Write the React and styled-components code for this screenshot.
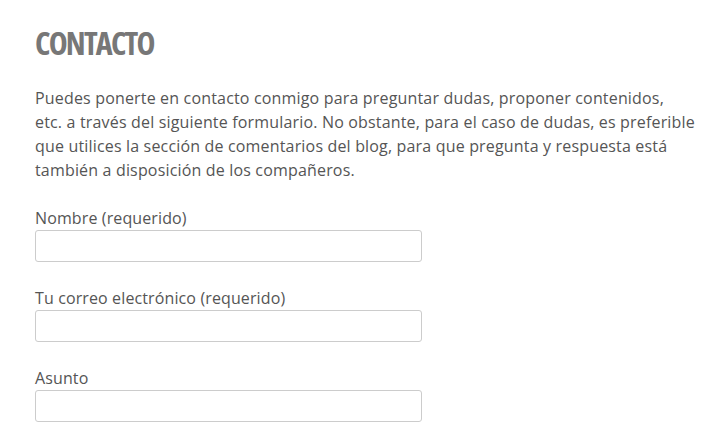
import React from "react";
import styled, { createGlobalStyle } from "styled-components";

const Global = createGlobalStyle`
  html, body { margin: 0; padding: 0; background: #fff; }
  body { font-family: "Open Sans", "Liberation Sans", sans-serif; }
`;

const Page = styled.main`
  padding: 27px 8px 0 35px;
  width: 670px;
`;

const Title = styled.h1`
  margin: 0;
  font-family: "Open Sans", sans-serif;
  font-weight: 700;
  font-size: 32px;
  line-height: 32px;
  color: #777;
  font-stretch: 75%;
  letter-spacing: -1.8px;
`;

const Intro = styled.p`
  margin: 27px 0 24px;
  font-size: 16px;
  line-height: 24px;
  letter-spacing: 0.17px;
  color: #555;
`;

const Form = styled.form`
  display: flex;
  flex-direction: column;
  gap: 24px;
`;

const Field = styled.label`
  display: flex;
  flex-direction: column;
  font-size: 16px;
  line-height: 24px;
  letter-spacing: 0.12px;
  color: #555;
`;

const Input = styled.input`
  box-sizing: border-box;
  width: 387px;
  height: 32px;
  margin: 0;
  border: 1px solid #ccc;
  border-radius: 3px;
  background: #fff;
  font: inherit;
`;

export default function App() {
  return (
    <>
      <Global />
      <Page>
        <Title>CONTACTO</Title>
        <Intro>
          Puedes ponerte en contacto conmigo para preguntar dudas, proponer contenidos,<br />
          etc. a través del siguiente formulario. No obstante, para el caso de dudas, es preferible<br />
          que utilices la sección de comentarios del blog, para que pregunta y respuesta está<br />
          también a disposición de los compañeros.
        </Intro>
        <Form>
          <Field>
            Nombre (requerido)
            <Input type="text" />
          </Field>
          <Field>
            Tu correo electrónico (requerido)
            <Input type="email" />
          </Field>
          <Field>
            Asunto
            <Input type="text" />
          </Field>
        </Form>
      </Page>
    </>
  );
}
